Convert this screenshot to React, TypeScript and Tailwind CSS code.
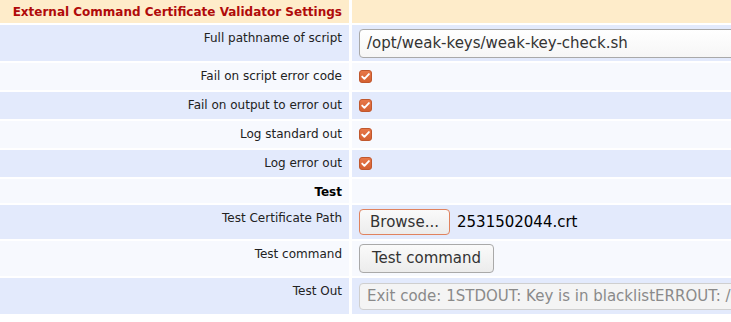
import React from 'react'

const font = { fontFamily: '"DejaVu Sans", Verdana, sans-serif' }

function Check() {
  return (
    <svg width="13" height="13" viewBox="0 0 13 13">
      <defs>
        <linearGradient id="cb" x1="0" y1="0" x2="0" y2="1">
          <stop offset="0" stopColor="#e8794a" />
          <stop offset="1" stopColor="#d35f30" />
        </linearGradient>
      </defs>
      <rect x="0.5" y="0.5" width="12" height="12" rx="2.5" fill="url(#cb)" stroke="#c0582e" />
      <path d="M3.2 6.6 L5.4 8.8 L9.9 4.1" fill="none" stroke="#fff" strokeWidth="1.9" strokeLinecap="round" strokeLinejoin="round" />
    </svg>
  )
}

type RowProps = { label: React.ReactNode; h: string; blue?: boolean; bold?: boolean; children?: React.ReactNode }

function Row({ label, h, blue, bold, children }: RowProps) {
  const bg = blue ? 'bg-[#e3eafc]' : 'bg-[#f7f9fe]'
  return (
    <div className={`flex gap-[3px] ${h}`}>
      <div className={`w-[349px] shrink-0 ${bg} text-right pr-[7px] pt-[5px] text-[12px] leading-4 text-[#222] ${bold ? 'font-bold text-black' : ''}`}>
        {label}
      </div>
      <div className={`flex-1 ${bg} flex items-center pl-[7px] overflow-hidden`}>{children}</div>
    </div>
  )
}

export default function App() {
  return (
    <div className="w-[731px] h-[322px] bg-white overflow-hidden" style={font}>
      <div className="flex flex-col gap-[2px]">
        <div className="flex gap-[3px] h-[23px]">
          <div className="w-[349px] shrink-0 bg-[#feecca] text-right pr-[7px] pt-[4px] text-[12px] leading-4 font-bold text-[#b00a0a]">
            External Command Certificate Validator Settings
          </div>
          <div className="flex-1 bg-[#feecca]" />
        </div>

        <Row label="Full pathname of script" h="h-[36px]" blue>
          <div className="w-[420px] shrink-0 h-[29px] border border-[#a9a9a9] rounded-[4px] bg-gradient-to-b from-white to-[#f6f6f6] flex items-center pl-[7px] text-[15px] text-[#333] whitespace-nowrap">
            /opt/weak-keys/weak-key-check.sh
          </div>
        </Row>
        <Row label="Fail on script error code" h="h-[27px]">
          <Check />
        </Row>
        <Row label="Fail on output to error out" h="h-[27px]" blue>
          <Check />
        </Row>
        <Row label="Log standard out" h="h-[27px]">
          <Check />
        </Row>
        <Row label="Log error out" h="h-[27px]" blue>
          <Check />
        </Row>
        <Row label="Test" h="h-[24px]" bold />
        <Row label="Test Certificate Path" h="h-[34px]" blue>
          <button className="h-[26px] w-[91px] shrink-0 border border-[#e0825e] rounded-[4px] bg-gradient-to-b from-[#fafafa] to-[#ececec] text-[15px] text-[#333]">
            Browse...
          </button>
          <span className="ml-[7px] text-[15px] text-black">2531502044.crt</span>
        </Row>
        <Row label="Test command" h="h-[35px]">
          <button className="h-[29px] w-[135px] shrink-0 border border-[#a9a9a9] rounded-[4px] bg-gradient-to-b from-[#fafafa] to-[#ececec] text-[15px] text-[#333]">
            Test command
          </button>
        </Row>
        <Row label="Test Out" h="h-[36px]" blue>
          <div className="w-[420px] shrink-0 h-[27px] border border-[#cfcfcf] rounded-[4px] bg-[#f4f4f4] flex items-center pl-[7px] text-[15px] text-[#8a8a8a] whitespace-nowrap">
            Exit code: 1STDOUT: Key is in blacklistERROUT: /opt/weak-keys
          </div>
        </Row>
      </div>
    </div>
  )
}
